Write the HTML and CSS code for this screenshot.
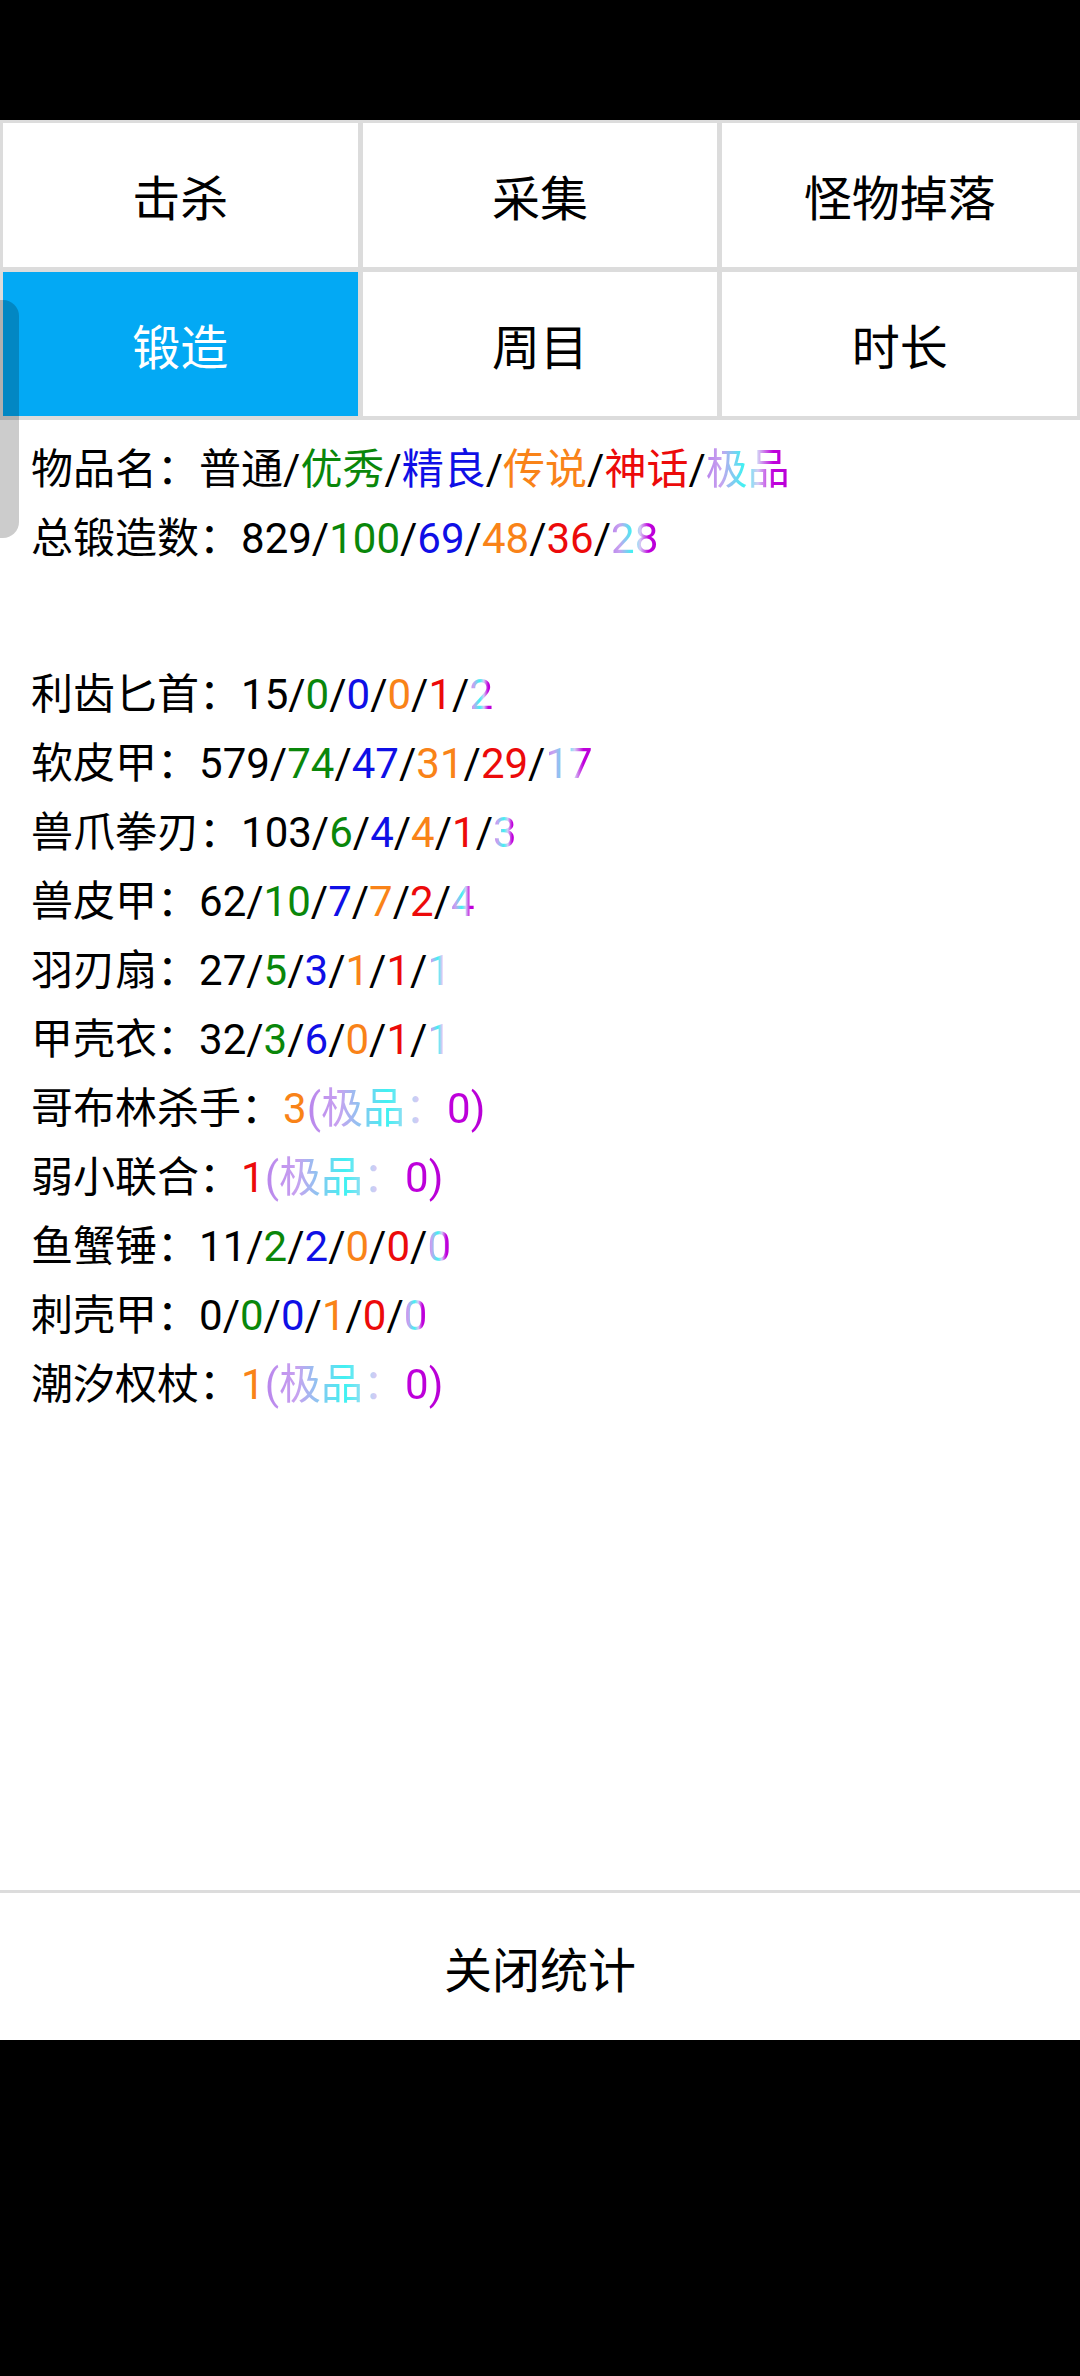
FILE: index.html
```html
<!DOCTYPE html>
<html lang="zh-CN">
<head>
  <meta charset="UTF-8">
  <meta name="viewport" content="width=device-width, initial-scale=1.0">
  <title>统计</title>
  <link rel="stylesheet" href="styles.css">
</head>
<body>
  <div class="screen">
    <!-- 状态栏 -->
    <div class="status-bar"></div>

    <div class="dialog">
      <!-- 分类按钮 -->
      <div class="tab-grid">
        <div class="tab">击杀</div>
        <div class="tab">采集</div>
        <div class="tab">怪物掉落</div>
        <div class="tab active">锻造</div>
        <div class="tab">周目</div>
        <div class="tab">时长</div>
      </div>

      <!-- 统计内容 -->
      <div class="stats">
        <div class="stats-head">
          <div class="line">物品名<span class="colon">：</span>普通/<span class="q2">优秀</span>/<span class="q3">精良</span>/<span class="q4">传说</span>/<span class="q5">神话</span>/<span class="q6">极品</span></div>
          <div class="line">总锻造数<span class="colon">：</span>829/<span class="q2">100</span>/<span class="q3">69</span>/<span class="q4">48</span>/<span class="q5">36</span>/<span class="q6">28</span></div>
        </div>

        <div class="stats-list">
          <div class="line">利齿匕首<span class="colon">：</span>15/<span class="q2">0</span>/<span class="q3">0</span>/<span class="q4">0</span>/<span class="q5">1</span>/<span class="q6">2</span></div>
          <div class="line">软皮甲<span class="colon">：</span>579/<span class="q2">74</span>/<span class="q3">47</span>/<span class="q4">31</span>/<span class="q5">29</span>/<span class="q6">17</span></div>
          <div class="line">兽爪拳刃<span class="colon">：</span>103/<span class="q2">6</span>/<span class="q3">4</span>/<span class="q4">4</span>/<span class="q5">1</span>/<span class="q6">3</span></div>
          <div class="line">兽皮甲<span class="colon">：</span>62/<span class="q2">10</span>/<span class="q3">7</span>/<span class="q4">7</span>/<span class="q5">2</span>/<span class="q6">4</span></div>
          <div class="line">羽刃扇<span class="colon">：</span>27/<span class="q2">5</span>/<span class="q3">3</span>/<span class="q4">1</span>/<span class="q5">1</span>/<span class="q6">1</span></div>
          <div class="line">甲壳衣<span class="colon">：</span>32/<span class="q2">3</span>/<span class="q3">6</span>/<span class="q4">0</span>/<span class="q5">1</span>/<span class="q6">1</span></div>
          <div class="line">哥布林杀手<span class="colon">：</span><span class="q4">3</span><span class="q6">(极品<span class="colon">：</span>0)</span></div>
          <div class="line">弱小联合<span class="colon">：</span><span class="q5">1</span><span class="q6">(极品<span class="colon">：</span>0)</span></div>
          <div class="line">鱼蟹锤<span class="colon">：</span>11/<span class="q2">2</span>/<span class="q3">2</span>/<span class="q4">0</span>/<span class="q5">0</span>/<span class="q6">0</span></div>
          <div class="line">刺壳甲<span class="colon">：</span>0/<span class="q2">0</span>/<span class="q3">0</span>/<span class="q4">1</span>/<span class="q5">0</span>/<span class="q6">0</span></div>
          <div class="line">潮汐权杖<span class="colon">：</span><span class="q4">1</span><span class="q6">(极品<span class="colon">：</span>0)</span></div>
        </div>
      </div>

      <!-- 底部按钮 -->
      <div class="close-btn">关闭统计</div>
    </div>

    <!-- 侧边悬浮把手 -->
    <div class="side-handle"></div>
  </div>
</body>
</html>
```

FILE: styles.css
```css
/* 全局样式 */
body {
  margin: 0;
  padding: 0;
  background-color: #000;
  font-family: Roboto, "Noto Sans CJK SC", sans-serif;
  color: #000;
}

.screen {
  position: relative;
  width: 1080px;
  height: 2376px;
  display: flex;
  flex-direction: column;
}

.status-bar {
  height: 120px;
  background-color: #000;
}

.dialog {
  height: 1920px;
  background-color: #fff;
  display: flex;
  flex-direction: column;
}

/* 分类按钮 */
.tab-grid {
  display: grid;
  grid-template-columns: repeat(3, 1fr);
  grid-auto-rows: 144px;
  gap: 5px;
  padding: 3px 3px 4px;
  background-color: #dcdcdc;
}
.tab {
  background-color: #fff;
  display: flex;
  align-items: center;
  justify-content: center;
  font-size: 48px;
}
.tab.active {
  background-color: #03a9f4;
  color: #fff;
}

/* 统计内容 */
.stats {
  flex: 1;
  padding: 11px 31px 0;
  font-size: 42px;
}
.line {
  height: 69px;
  line-height: 69px;
  white-space: nowrap;
}
.stats-list {
  margin-top: 87px;
}
.colon {
  font-family: "Noto Sans CJK TC", sans-serif;
}

.q2 { color: #0a870a; }
.q3 { color: #0f0fe6; }
.q4 { color: #f98318; }
.q5 { color: #ec0a0a; }
.q6 {
  background: linear-gradient(to right, #b884ec 0%, #c8a2f0 18%, #3ff2f2 45%, #d4cbf4 62%, #c000dc 80%, #b800d6 100%);
  -webkit-background-clip: text;
  background-clip: text;
  color: transparent;
}
.q6 .colon {
  color: transparent;
}

/* 底部按钮 */
.close-btn {
  height: 147px;
  border-top: 3px solid #dcdcdc;
  display: flex;
  align-items: center;
  justify-content: center;
  font-size: 48px;
}

.side-handle {
  position: absolute;
  left: 0;
  top: 300px;
  width: 19px;
  height: 238px;
  border-radius: 0 16px 16px 0;
  background-color: rgba(0, 0, 0, 0.2);
}
```
